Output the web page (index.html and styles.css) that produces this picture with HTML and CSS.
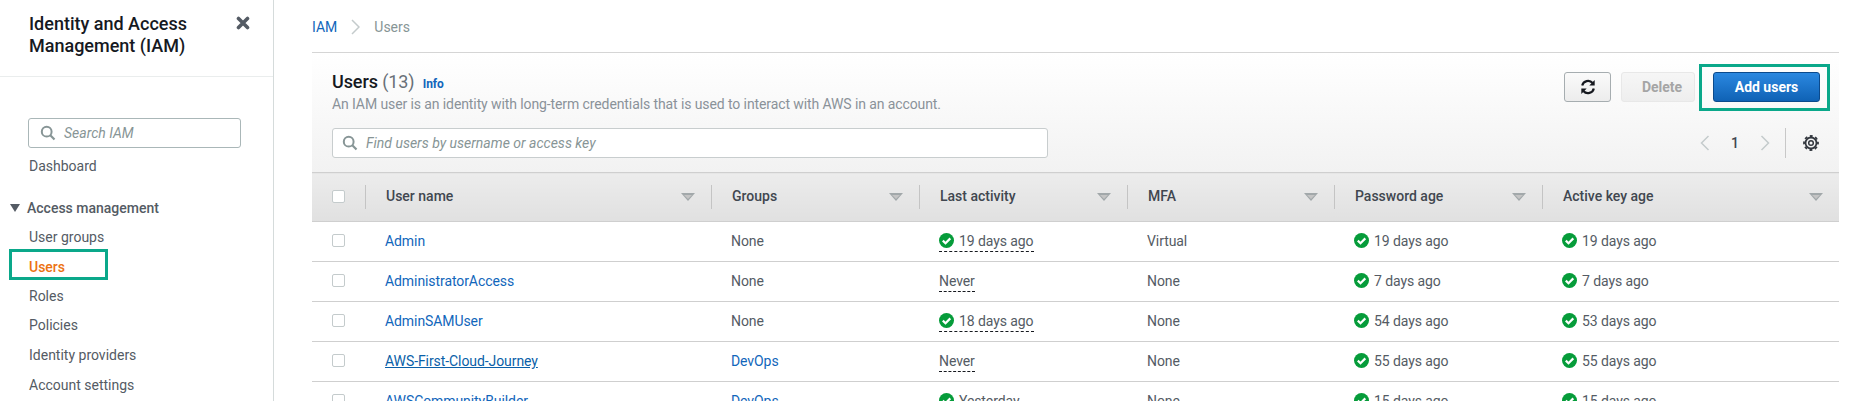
FILE: index.html
```html
<!DOCTYPE html>
<html lang="en">
<head>
    <meta charset="UTF-8">
    <title>Users | IAM</title>
    <link rel="stylesheet" href="styles.css">
</head>
<body>
    <div class="page">
        <aside class="sidebar">
            <div class="side-head">
                <h2>Identity and Access Management (IAM)</h2>
                <svg class="close" width="14" height="14" viewBox="0 0 14 14"><path d="M2.5 2.5l9 9M11.5 2.5l-9 9" stroke="#545b64" stroke-width="3.6" stroke-linecap="round" fill="none"/></svg>
            </div>
            <nav class="side-nav">
                <div class="side-search">
                    <svg width="16" height="16" viewBox="0 0 16 16"><circle cx="6.7" cy="6.7" r="4.9" stroke="#879596" stroke-width="2" fill="none"/><path d="M10.3 10.3l4.2 4.2" stroke="#879596" stroke-width="2.2" fill="none"/></svg>
                    <span>Search IAM</span>
                </div>
                <a class="nav-item dash" href="#">Dashboard</a>
                <div class="nav-section"><i class="caret"></i>Access management</div>
                <a class="nav-item" href="#">User groups</a>
                <a class="nav-item active" href="#">Users</a>
                <a class="nav-item" href="#">Roles</a>
                <a class="nav-item" href="#">Policies</a>
                <a class="nav-item" href="#">Identity providers</a>
                <a class="nav-item" href="#">Account settings</a>
                <span class="mark mark-nav"></span>
            </nav>
        </aside>

        <main class="main">
            <div class="crumbs">
                <a href="#">IAM</a>
                <svg width="9" height="16" viewBox="0 0 9 16"><path d="M1 1l7 7-7 7" stroke="#c4cbcc" stroke-width="1.5" fill="none"/></svg>
                <span>Users</span>
            </div>

            <section class="panel">
                <div class="panel-top">
                    <div class="top-row">
                        <div>
                            <h1>Users <span class="count">(13)</span> <a class="info" href="#">Info</a></h1>
                            <p class="desc">An IAM user is an identity with long-term credentials that is used to interact with AWS in an account.</p>
                        </div>
                        <div class="actions">
                            <button class="btn refresh" aria-label="Refresh">
                                <svg width="16" height="16" viewBox="0 0 16 16"><path d="M2.2 6.6A6 6 0 0 1 12.6 4" stroke="#16191f" stroke-width="2.2" fill="none"/><path d="M14.7 1v5.4H9.3z" fill="#16191f"/><path d="M13.8 9.4A6 6 0 0 1 3.4 12" stroke="#16191f" stroke-width="2.2" fill="none"/><path d="M1.3 15V9.6h5.4z" fill="#16191f"/></svg>
                            </button>
                            <button class="btn delete" disabled>Delete</button>
                            <span class="add-wrap">
                                <button class="btn add">Add users</button>
                                <span class="mark mark-add"></span>
                            </span>
                        </div>
                    </div>
                    <div class="filter-row">
                        <div class="filter">
                            <svg width="16" height="16" viewBox="0 0 16 16"><circle cx="6.7" cy="6.7" r="4.9" stroke="#879596" stroke-width="2" fill="none"/><path d="M10.3 10.3l4.2 4.2" stroke="#879596" stroke-width="2.2" fill="none"/></svg>
                            <span>Find users by username or access key</span>
                        </div>
                        <div class="pager">
                            <svg width="10" height="16" viewBox="0 0 10 16"><path d="M8.5 1L1.5 8l7 7" stroke="#c4cbcc" stroke-width="1.5" fill="none"/></svg>
                            <span class="page-num">1</span>
                            <svg width="10" height="16" viewBox="0 0 10 16"><path d="M1.5 1l7 7-7 7" stroke="#c4cbcc" stroke-width="1.5" fill="none"/></svg>
                            <i class="pager-sep"></i>
                            <svg class="gear" width="16" height="16" viewBox="0 0 16 16"><circle cx="8" cy="8" r="2.3" stroke="#33383f" stroke-width="1.5" fill="none"/><circle cx="8" cy="8" r="5.5" stroke="#33383f" stroke-width="1.8" fill="none"/><circle cx="8" cy="8" r="7" stroke="#33383f" stroke-width="1.8" stroke-dasharray="2.9 2.6" stroke-dashoffset="1.45" fill="none"/></svg>
                        </div>
                    </div>
                </div>

                <table class="users">
                    <colgroup>
                        <col class="c-check"><col class="c-name"><col class="c-mid"><col class="c-mid"><col class="c-mfa"><col class="c-mid"><col>
                    </colgroup>
                    <thead>
                        <tr>
                            <th class="check-cell"><i class="box"></i></th>
                            <th><div class="th-in">User name<i class="sort"></i></div></th>
                            <th><div class="th-in">Groups<i class="sort"></i></div></th>
                            <th><div class="th-in">Last activity<i class="sort"></i></div></th>
                            <th><div class="th-in">MFA<i class="sort"></i></div></th>
                            <th><div class="th-in">Password age<i class="sort"></i></div></th>
                            <th><div class="th-in">Active key age<i class="sort"></i></div></th>
                        </tr>
                    </thead>
                    <tbody id="rows"></tbody>
                </table>
            </section>
        </main>
    </div>

    <script>
        const okIcon = '<svg class="ok" width="15" height="15" viewBox="0 0 15 15"><circle cx="7.5" cy="7.5" r="7.5" fill="#069c3a"/><path d="M3.8 7.6l2.7 2.6 4.8-4.8" stroke="#fff" stroke-width="2.2" fill="none"/></svg>';

        const users = [
            ['Admin', 'None', '19 days ago', 'Virtual', '19 days ago', '19 days ago'],
            ['AdministratorAccess', 'None', 'Never', 'None', '7 days ago', '7 days ago'],
            ['AdminSAMUser', 'None', '18 days ago', 'None', '54 days ago', '53 days ago'],
            ['AWS-First-Cloud-Journey', 'DevOps', 'Never', 'None', '55 days ago', '55 days ago'],
            ['AWSCommunityBuilder', 'DevOps', 'Yesterday', 'None', '15 days ago', '15 days ago'],
        ];

        function age(text) {
            return `<span class="age">${okIcon}${text}</span>`;
        }

        document.getElementById('rows').innerHTML = users.map(u => {
            const nameClass = u[0] === 'AWS-First-Cloud-Journey' ? 'link hovered' : 'link';
            const group = u[1] === 'None' ? 'None' : `<a class="link" href="#">${u[1]}</a>`;
            const last = u[2] === 'Never'
                ? '<span class="dashed">Never</span>'
                : `<span class="dashed">${age(u[2])}</span>`;
            return `<tr>
                <td class="check-cell"><i class="box"></i></td>
                <td><a class="${nameClass}" href="#">${u[0]}</a></td>
                <td>${group}</td>
                <td>${last}</td>
                <td>${u[3]}</td>
                <td>${age(u[4])}</td>
                <td>${age(u[5])}</td>
            </tr>`;
        }).join('');
    </script>
</body>
</html>
```
FILE: styles.css
```css
* {
    box-sizing: border-box;
}
html, body {
    margin: 0;
    height: 100%;
    overflow: hidden;
    background-color: #fff;
}
body {
    font-family: Roboto, Arial, sans-serif;
    font-size: 14px;
    line-height: 20px;
    color: #545b64;
}
a {
    text-decoration: none;
}
.page {
    display: flex;
    height: 401px;
    overflow: hidden;
}

/* left nav */
.sidebar {
    width: 274px;
    flex: none;
    border-right: 1px solid #d5dbdb;
}
.side-head {
    display: flex;
    justify-content: space-between;
    height: 77px;
    padding: 13px 23px 0 29px;
    border-bottom: 1px solid #eaeded;
}
.side-head h2 {
    margin: 0;
    width: 190px;
    font-size: 18px;
    line-height: 22px;
    font-weight: 500;
    color: #16191f;
}
.close {
    margin-top: 3px;
}
.side-nav {
    position: relative;
    padding-top: 41px;
}
.side-search {
    display: flex;
    align-items: center;
    gap: 8px;
    width: 213px;
    height: 30px;
    margin-left: 28px;
    padding-left: 11px;
    border: 1px solid #aab7b8;
    border-radius: 3px;
    font-style: italic;
    color: #879596;
}
.nav-item {
    display: block;
    height: 29.6px;
    padding: 4px 0 0 29px;
    color: #545b64;
}
.dash {
    margin-top: 4px;
}
.nav-section {
    display: flex;
    align-items: center;
    height: 30px;
    margin-top: 11px;
    padding-left: 10px;
    font-weight: 500;
    color: #545b64;
}
.caret {
    width: 0;
    height: 0;
    margin-right: 7px;
    border-left: 5px solid transparent;
    border-right: 5px solid transparent;
    border-top: 8px solid #545b64;
}
.active {
    padding-top: 5px;
    color: #ec7211;
    font-weight: 500;
}
.mark {
    position: absolute;
    border: 3px solid #0aa88a;
}
.mark-nav {
    left: 9px;
    top: 172px;
    width: 99px;
    height: 31px;
}

/* main area */
.main {
    flex: 1;
    min-width: 0;
    padding: 0 28px 0 38px;
}
.crumbs {
    display: flex;
    align-items: center;
    gap: 14px;
    height: 52px;
    padding-top: 2px;
    color: #879596;
}
.crumbs a {
    color: #1166bb;
}
.panel {
    border-top: 1px solid #d5d5d5;
}
.panel-top {
    height: 119px;
    padding: 19px 19px 0 20px;
    background: linear-gradient(#fff, #f2f2f2);
}
.top-row {
    display: flex;
    justify-content: space-between;
    height: 56px;
}
.top-row h1 {
    margin: -1px 0 0;
    font-size: 18px;
    line-height: 22px;
    font-weight: 500;
    color: #16191f;
    letter-spacing: -0.1px;
}
.count {
    font-weight: 400;
    color: #687078;
}
.info {
    margin-left: 4px;
    font-size: 12px;
    font-weight: 700;
    color: #1166bb;
}
.desc {
    margin: -1px 0 0;
    color: #8a9299;
    letter-spacing: -0.1px;
}
.actions {
    display: flex;
    gap: 10px;
}
.btn {
    height: 30px;
    border: 1px solid #879596;
    border-radius: 2px;
    font-family: inherit;
    font-size: 14px;
    font-weight: 700;
}
.refresh {
    display: flex;
    align-items: center;
    justify-content: center;
    width: 47px;
    padding: 0;
    border-color: #a6adb0;
    border-radius: 3px;
    background: linear-gradient(#fafafa, #ececec);
}
.delete {
    width: 74px;
    padding: 0 0 0 8px;
    border-color: #e8e8e8;
    border-radius: 3px;
    background: linear-gradient(#f6f6f6, #eeeeee);
    color: #a5a5a5;
}
.add-wrap {
    position: relative;
    margin-left: 8px;
}
.add {
    width: 107px;
    border-color: #0b4a8c;
    border-radius: 3px;
    background: linear-gradient(#2b88e0, #0f62b5);
    color: #fff;
}
.mark-add {
    left: -14px;
    top: -8px;
    width: 131px;
    height: 47px;
}
.filter-row {
    display: flex;
    justify-content: space-between;
}
.filter {
    display: flex;
    align-items: center;
    gap: 8px;
    width: 716px;
    height: 30px;
    padding-left: 9px;
    border: 1px solid #c8cdce;
    border-radius: 3px;
    background-color: #fff;
    font-style: italic;
    color: #879596;
}
.pager {
    display: flex;
    align-items: center;
    height: 30px;
}
.page-num {
    width: 50px;
    text-align: center;
    font-weight: 500;
    color: #414750;
}
.pager-sep {
    width: 1px;
    height: 30px;
    margin: 0 17px 0 15px;
    background-color: #c8c8c8;
}
.gear {
    margin-right: 1px;
}

/* table */
.users {
    width: 100%;
    table-layout: fixed;
    border-collapse: collapse;
}
.c-check {
    width: 53px;
}
.c-name {
    width: 346px;
}
.c-mid {
    width: 208px;
}
.c-mfa {
    width: 207px;
}
.users th {
    height: 49px;
    padding: 0;
    border-top: 1px solid #cfcfcf;
    border-bottom: 1px solid #cfcfcf;
    background: linear-gradient(#ececec, #e0e0e0);
    text-align: left;
    font-weight: 500;
    color: #414750;
}
.users th.check-cell {
    padding-left: 20px;
}
.th-in {
    display: flex;
    align-items: center;
    justify-content: space-between;
    height: 24px;
    padding: 0 16px 2px 20px;
    border-left: 1px solid #c4c4c4;
}
.sort {
    position: relative;
    width: 0;
    height: 0;
    margin-top: 2px;
    border-left: 7px solid transparent;
    border-right: 7px solid transparent;
    border-top: 8px solid #a2a8aa;
}
.sort::after {
    content: "";
    position: absolute;
    left: -4px;
    top: -6px;
    border-left: 4px solid transparent;
    border-right: 4px solid transparent;
    border-top: 4px solid #c4c4c4;
}
.users td {
    height: 40px;
    padding: 0 0 1px 20px;
    border-bottom: 1px solid #cfcfcf;
    white-space: nowrap;
    letter-spacing: -0.08px;
}
.box {
    display: block;
    width: 13px;
    height: 13px;
    margin-top: -2px;
    border: 1px solid #c4cbcc;
    border-radius: 2px;
    background-color: #fff;
}
.link {
    color: #1166bb;
}
.hovered {
    color: #0a5fa8;
    text-decoration: underline;
}
.age {
    display: inline-flex;
    align-items: center;
    vertical-align: -2px;
}
.ok {
    margin-right: 5px;
}
.dashed {
    display: inline-block;
    border-bottom: 1px dashed #16191f;
    vertical-align: middle;
}
.dashed .age {
    vertical-align: top;
}
```
